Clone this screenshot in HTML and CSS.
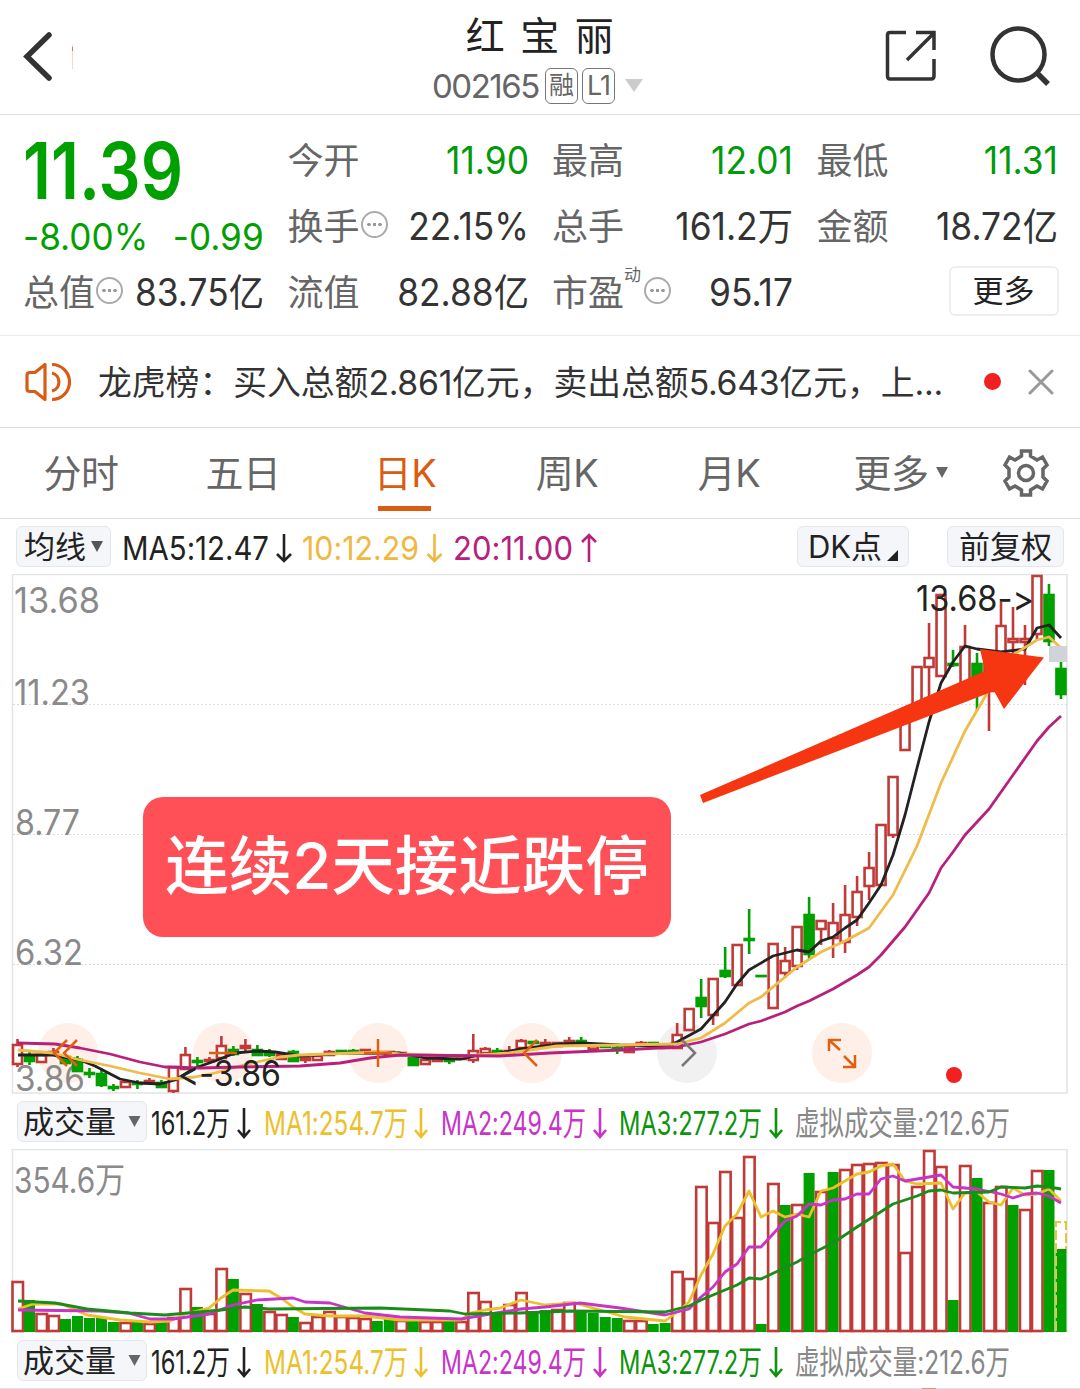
FILE: index.html
```html
<!DOCTYPE html>
<html lang="zh-CN">
<head>
  <meta charset="UTF-8">
  <meta name="viewport" content="width=device-width, initial-scale=1">
  <title>红宝丽 002165</title>
  <link rel="stylesheet" href="styles.css">
</head>
<body>
  <header class="header">
    <svg class="back" width="60" height="60" viewBox="0 0 60 60">
      <path d="M34 8L12 29.500L34 51" fill="none" stroke="#333" stroke-width="5.500" stroke-linecap="round"/>
      <path d="M57.500 18v24" stroke="#f7d9c4" stroke-width="1"/>
      <path d="M57.500 20v4" stroke="#e0794a" stroke-width="1"/>
    </svg>
    <div class="stock">
      <h1>红宝丽</h1>
      <div class="code">
        <span class="code-num">002165</span>
        <span class="tag">融</span>
        <span class="tag tag-l1">L1</span>
        <svg width="18" height="14" viewBox="0 0 18 14"><path d="M0 0h18l-9 13z" fill="#ccc"/></svg>
      </div>
    </div>
    <div class="actions">
      <svg width="52" height="52" viewBox="0 0 52 52" fill="none" stroke="#333" stroke-width="3.500">
        <path d="M21 2.500H5Q2.500 2.500 2.500 5V46Q2.500 49 5 49H46Q49 49 49 46V29"/>
        <path d="M31 2.500H49V20M49 3L22 30"/>
      </svg>
      <svg width="62" height="62" viewBox="0 0 62 62" fill="none" stroke="#333" stroke-width="4.500">
        <circle cx="28.500" cy="28.500" r="26"/>
        <path d="M46 46L58 58" stroke-width="5.500"/>
      </svg>
    </div>
  </header>

  <section class="quote">
    <div class="price-box">
      <div class="price"><span>11.39</span></div>
      <div class="change"><span>-8.00%</span><span>-0.99</span></div>
    </div>
    <div class="cell"><label>今开</label><b class="down">11.90</b></div>
    <div class="cell"><label>最高</label><b class="down">12.01</b></div>
    <div class="cell"><label>最低</label><b class="down">11.31</b></div>
    <div class="cell"><label>换手</label><i class="dots"></i><b>22.15%</b></div>
    <div class="cell"><label>总手</label><b>161.2万</b></div>
    <div class="cell"><label>金额</label><b>18.72亿</b></div>
    <div class="cell"><label>总值</label><i class="dots"></i><b>83.75亿</b></div>
    <div class="cell"><label>流值</label><b>82.88亿</b></div>
    <div class="cell"><label>市盈</label><sup>动</sup><i class="dots"></i><b>95.17</b></div>
    <div class="cell cell-more"><button class="more">更多</button></div>
  </section>

  <section class="notice">
    <svg width="46" height="40" viewBox="0 0 46 40" fill="none" stroke="#d95c13" stroke-width="3.200">
      <path d="M20 2.500V37.500L10 29.500H5Q2 29.500 2 27V13Q2 10.500 5 10.500H10Z" stroke-linejoin="round"/>
      <path d="M27 2.500A17.500 17.500 0 0 1 27 37.500"/>
      <path d="M27 11A9.300 9.300 0 0 1 27 29"/>
    </svg>
    <p>龙虎榜：买入总额<span>2.861</span>亿元，卖出总额<span>5.643</span>亿元，上<span>...</span></p>
    <i class="dot"></i>
    <svg width="26" height="26" viewBox="0 0 26 26"><path d="M2 2L24 24M24 2L2 24" stroke="#999" stroke-width="3" stroke-linecap="round"/></svg>
  </section>

  <nav class="tabs">
    <a>分时</a>
    <a>五日</a>
    <a class="active">日K</a>
    <a>周K</a>
    <a>月K</a>
    <a class="tab-more">更多<svg width="12" height="12" viewBox="0 0 12 12"><path d="M0 0h12l-6 11z" fill="#666"/></svg></a>
    <svg class="gear" width="46" height="48" viewBox="0 0 46 48" fill="none" stroke="#666" stroke-width="3.500">
      <path d="M18.500 2H27.500V7L34 11L39.500 8L44 16L40 20V28L44 32L39.500 40L34 37L27.500 41V46H18.500V41L12 37L6.500 40L2 32L6 28V20L2 16L6.500 8L12 11L18.500 7Z"/>
      <circle cx="23" cy="24" r="7.500"/>
    </svg>
  </nav>

  <div class="legend legend-main">
    <button class="chip">均线<svg width="12" height="12" viewBox="0 0 12 12"><path d="M0 0h12l-6 11z" fill="#555"/></svg></button>
    <svg class="legend-text" width="484" height="54" viewBox="116 520 484 54">
      <g fill="#222"><text x="122" y="560" textLength="147" lengthAdjust="spacingAndGlyphs">MA5:12.47</text><path class="arrow" stroke="#222" d="M284 534V561M277 554L284 561L291 554"/></g>
      <g fill="#f0b840"><text x="302" y="560" textLength="117" lengthAdjust="spacingAndGlyphs">10:12.29</text><path class="arrow" stroke="#f0b840" d="M434.500 534V561M427.500 554L434.500 561L441.500 554"/></g>
      <g fill="#b8207c"><text x="453" y="560" textLength="120" lengthAdjust="spacingAndGlyphs">20:11.00</text><path class="arrow" stroke="#b8207c" d="M589 562V535M582 542L589 535L596 542"/></g>
    </svg>
    <button class="chip chip-dk">DK点<svg width="11" height="11" viewBox="0 0 11 11"><path d="M11 0V11H0z" fill="#222"/></svg></button>
    <button class="chip chip-fq">前复权</button>
  </div>

  <div class="chart">
    <svg id="kline" width="1080" height="520" viewBox="0 574 1080 520"></svg>
    <div class="callout">连续2天接近跌停</div>
  </div>

  <div class="legend legend-vol">
    <button class="chip chip-vol">成交量<svg width="13" height="12" viewBox="0 0 12 12"><path d="M0 0h12l-6 11z" fill="#666"/></svg></button>
    <svg class="legend-text vol-text" width="866" height="54" viewBox="150 0 866 54"></svg>
  </div>

  <svg id="volume" width="1080" height="184" viewBox="0 1149 1080 184"></svg>

  <div class="legend legend-vol">
    <button class="chip chip-vol">成交量<svg width="13" height="12" viewBox="0 0 12 12"><path d="M0 0h12l-6 11z" fill="#666"/></svg></button>
    <svg class="legend-text vol-text" width="866" height="54" viewBox="150 0 866 54"></svg>
  </div>
  <div class="next-chart"><i></i></div>

  <script src="chart.js"></script>
</body>
</html>
```

FILE: styles.css
```css
* {
  box-sizing: border-box;
}

body {
  margin: 0;
  width: 1080px;
  height: 1389px;
  overflow: hidden;
  background: #fff;
  color: #333;
  font-family: Inter, "Noto Sans CJK SC", sans-serif;
  font-feature-settings: "calt" 0;
}

svg {
  display: block;
  flex: none;
}

button {
  font-family: inherit;
  color: #222;
  padding: 0;
}

/* header */
.header {
  display: grid;
  grid-template-columns: 200px 1fr 200px;
  height: 115px;
  border-bottom: 1px solid #dcdfe0;
}

.back {
  margin: 27px 0 0 15px;
}

.stock {
  padding-top: 10px;
}

h1 {
  margin: 0;
  font-size: 39px;
  line-height: 52px;
  font-weight: 400;
  letter-spacing: 15.5px;
  text-align: center;
  text-indent: 15px;
  color: #222;
}

.code {
  display: flex;
  align-items: center;
  height: 48px;
  margin-left: 232px;
  color: #666;
}

.code-num {
  width: 113px;
  font-size: 33px;
  letter-spacing: -1.5px;
}

.tag {
  width: 33px;
  height: 36px;
  margin-right: 4px;
  border: 1.5px solid #777;
  border-radius: 6px;
  font-size: 25px;
  line-height: 33px;
  text-align: center;
}

.tag-l1 {
  font-size: 27px;
  letter-spacing: -1px;
  margin-right: 10px;
}

.actions {
  display: flex;
  gap: 53px;
  padding: 26px 0 0 5px;
}

.actions svg:first-child {
  margin-top: 4px;
}

/* quote */
.quote {
  display: grid;
  grid-template-columns: repeat(4, 241px);
  grid-template-rows: repeat(3, 66px);
  column-gap: 23.5px;
  height: 221px;
  padding: 12px 23px 0;
  border-bottom: 1px solid #eceeee;
}

.price-box {
  grid-row: span 2;
  color: #00a000;
}

.price {
  height: 96px;
  font-size: 78px;
  line-height: 88px;
  font-weight: 600;
}

.price span {
  display: inline-block;
  transform: scaleX(.85);
  transform-origin: left;
}

.change {
  display: flex;
  justify-content: space-between;
  font-size: 37px;
  line-height: 28px;
}

.change span {
  transform: scaleX(.95);
  transform-origin: left;
}

.change span:last-child {
  transform-origin: right;
}

.cell {
  display: flex;
  align-items: center;
  min-width: 0;
  white-space: nowrap;
}

.cell label {
  width: 72px;
  flex: none;
  margin-top: -4px;
  font-size: 36px;
  color: #666;
}

.cell b {
  flex: 1;
  width: 0;
  display: flex;
  justify-content: flex-end;
  font-size: 38px;
  line-height: 60px;
  font-weight: 400;
  transform: scaleX(.93);
  transform-origin: right;
}

.cell b.down {
  color: #009a0a;
}

.cell sup {
  width: 19px;
  align-self: flex-start;
  margin-top: 2px;
  font-size: 17px;
  color: #666;
}

.dots {
  flex: none;
  width: 27px;
  height: 27px;
  margin: -3px 0 0 1px;
  border: 2px solid #aaa;
  border-radius: 50%;
  background:
    radial-gradient(circle at 6px 11.5px, #999 1.5px, transparent 2px),
    radial-gradient(circle at 11.5px 11.5px, #999 1.5px, transparent 2px),
    radial-gradient(circle at 17px 11.5px, #999 1.5px, transparent 2px);
}

.cell-more {
  justify-content: flex-end;
}

.more {
  width: 110px;
  height: 50px;
  margin: -2px -1px 0 0;
  border: 2px solid #eceef0;
  border-radius: 6px;
  background: #fff;
  font-size: 31px;
  line-height: 44px;
}

/* notice */
.notice {
  display: flex;
  align-items: center;
  height: 92px;
  padding-left: 25px;
  border-bottom: 1px solid #dcdfe0;
}

.notice p {
  width: 860px;
  margin: -3px 0 0 27px;
  font-size: 33.8px;
  white-space: nowrap;
}

.notice p span {
  letter-spacing: -.3px;
}

.dot {
  width: 17px;
  height: 17px;
  margin: 0 27px 0 26px;
  border-radius: 50%;
  background: #f22020;
}

/* tabs */
.tabs {
  display: flex;
  height: 91px;
  border-bottom: 1px solid #dcdfe0;
}

.tabs a {
  width: 162px;
  font-size: 38px;
  line-height: 90px;
  text-align: center;
  letter-spacing: -.5px;
  color: #666;
}

.tabs .active {
  color: #d95c13;
  background: linear-gradient(#d95c13, #d95c13) 54px 78px / 53px 5px no-repeat;
}

.tabs .tab-more {
  display: flex;
  align-items: center;
  justify-content: center;
  gap: 7px;
  width: 181px;
}

.gear {
  margin: 21px 0 0 12px;
}

/* legends */
.legend {
  display: flex;
  align-items: center;
  height: 55px;
}

.chip {
  display: flex;
  flex: none;
  align-items: center;
  justify-content: center;
  gap: 5px;
  width: 95px;
  height: 41px;
  border: 1.5px solid #e3e6ea;
  border-radius: 6px;
  background: #f5f6fa;
  font-size: 31px;
  line-height: 36px;
}

.legend-main .chip:first-child {
  margin: 0 5px 0 16px;
}

.chip-dk {
  width: 112px;
  margin-left: 197px;
}

.chip-dk svg {
  align-self: flex-end;
  margin-bottom: 5px;
}

.chip-fq {
  width: 117px;
  margin-left: 38px;
}

.chip-vol {
  width: 130px;
  margin: 0 3px 0 17px;
  gap: 12px;
}

.legend-text {
  font-size: 33px;
}

.arrow {
  fill: none;
  stroke-width: 2.6;
}

/* charts */
.chart {
  position: relative;
  height: 520px;
}

.callout {
  position: absolute;
  left: 143px;
  top: 223px;
  width: 528px;
  height: 140px;
  border-radius: 20px;
  background: #ff4f57;
  color: #fff;
  font-size: 63.5px;
  font-weight: 500;
  line-height: 138px;
  text-align: center;
  white-space: nowrap;
}

.frame {
  fill: none;
  stroke: #e2e4e5;
  stroke-width: 1.5;
}

.grid {
  stroke: #ddd;
  stroke-dasharray: 2 2;
}

.axis {
  fill: #8a8a8a;
  font-size: 35px;
}

.mark {
  fill: #222;
  font-size: 35px;
}

.line {
  fill: none;
  stroke-width: 2.8;
  stroke-linejoin: round;
}

.up {
  fill: #fff;
  stroke: #c03a38;
  stroke-width: 2.6;
}

.dn {
  fill: #00a000;
  stroke: #00a000;
  stroke-width: 2.6;
}

.vdn {
  fill: #00a000;
}

.next-chart {
  height: 2px;
  background: #e2e4e5;
}

.next-chart i {
  display: block;
  width: 14px;
  height: 2px;
  margin-left: 922px;
  background: #d89090;
}
```

FILE: chart.js
```js
const STEP = 11.994;
const X0 = 17.5;
const cx = i => X0 + i * STEP;

// direction, high, body top, body bottom, low (y values)
const candles = [
  ['r',1039,1045,1064,1067],['g',1052,1056,1061,1065],['r',1051,1055,1062,1062],['r',1048,1052,1053,1054],
  ['g',1055,1057,1063,1063],['g',1056,1060,1071,1072],['g',1068,1073,1074,1078],['g',1068,1074,1085,1087],
  ['g',1084,1087,1088,1091],['r',1081,1082,1087,1087],['g',1080,1083,1084,1089],['r',1078,1081,1083,1084],
  ['g',1080,1083,1087,1088],['r',1067,1067,1091,1093],['r',1047,1055,1069,1070],['g',1057,1061,1062,1066],
  ['r',1057,1060,1061,1064],['r',1036,1046,1058,1058],['g',1046,1050,1054,1056],['r',1039,1046,1048,1053],
  ['g',1045,1050,1055,1056],['g',1049,1053,1055,1057],['r',1054,1055,1059,1060],['g',1050,1052,1061,1062],
  ['r',1057,1058,1060,1063],['r',1053,1056,1060,1061],['r',1050,1052,1055,1056],['g',1051,1051,1052,1052],
  ['g',1049,1051,1053,1053],['r',1049,1050,1053,1053],['r',1051,1052,1053,1054],['r',1051,1052,1054,1054],
  ['r',1052,1053,1055,1055],['g',1057,1058,1065,1065],['r',1059,1060,1064,1064],['r',1057,1058,1061,1061],
  ['g',1058,1060,1061,1064],['r',1056,1057,1059,1060],['r',1034,1051,1060,1063],['r',1047,1049,1053,1053],
  ['g',1048,1051,1053,1054],['r',1046,1051,1053,1054],['r',1039,1041,1048,1048],['g',1041,1042,1043,1044],
  ['r',1039,1043,1044,1048],['r',1042,1043,1046,1046],['r',1037,1041,1044,1044],['g',1037,1041,1043,1044],
  ['r',1045,1046,1049,1050],['g',1045,1046,1047,1047],['g',1046,1048,1050,1054],['r',1046,1047,1052,1053],
  ['r',1041,1043,1044,1045],['g',1043,1043,1044,1045],['r',1046,1046,1048,1048],['r',1023,1035,1048,1048],
  ['r',1008,1009,1030,1030],['g',979,998,1006,1018],['r',978,979,1015,1025],['g',947,971,976,978],
  ['r',944,945,985,986],['g',909,939,940,954],['g',976,976,976,976],['r',943,944,1008,1009],
  ['r',947,961,973,978],['r',926,927,966,970],['g',897,915,954,960],['r',920,921,929,945],
  ['r',903,923,938,958],['r',885,915,942,953],['r',876,892,917,926],['r',852,868,886,900],
  ['r',824,825,885,886],['r',776,777,835,838],['r',717,718,750,751],['r',666,667,712,712],
  ['r',623,658,667,705],['r',594,595,676,677],['g',650,664,665,667],['r',625,647,690,690],
  ['g',653,664,690,711],['r',660,661,691,731],['r',602,626,660,660],['r',607,639,642,670],
  ['r',625,639,642,685],['r',575,576,634,640],['g',584,595,641,646],['g',662,669,694,699]
];

const volumes = ('r1281 g1300 r1313 r1315 g1319 g1316 g1318 g1318 g1322 r1322 g1322 r1323 g1322 r1317 r1288 g1307 ' +
  'r1313 r1268 g1279 r1293 g1304 r1311 r1314 g1317 r1322 r1316 r1311 r1316 r1317 r1318 g1321 g1319 r1320 g1320 ' +
  'r1321 r1321 g1320 r1321 r1292 r1301 g1313 r1304 r1292 g1311 g1310 r1309 r1302 g1311 g1313 g1317 g1318 r1320 ' +
  'r1320 g1324 g1323 r1271 r1278 r1186 r1222 r1171 r1217 r1156 g1324 r1183 g1205 r1204 g1173 r1191 g1172 r1169 ' +
  'r1164 r1163 r1162 r1164 r1252 r1186 r1150 r1166 g1300 r1165 g1178 r1202 r1186 g1205 r1209 r1170 g1170 g1249').split(' ');

const ma5 = '18,1055 53,1055 80,1060 95,1066 120,1079 140,1083 160,1084 175,1080 195,1068 215,1061 235,1053 257,1051 275,1052 300,1056 345,1053 400,1053 425,1058 461,1059 480,1055 500,1053 521,1049 560,1044 581,1043 620,1045 665,1046 677,1042 701,1029 725,1002 737,984 749,970 773,956 797,950 809,952 821,941 833,937 845,928 857,920 869,903 881,885 893,855 905,815 917,768 929,722 941,683 953,662 965,646 977,649 1001,652 1025,649 1037,628 1049,625 1061,638';
const ma10 = '18,1050 53,1053 80,1060 110,1066 140,1073 170,1079 195,1077 215,1073 240,1066 257,1062 280,1057 300,1055 380,1052 400,1054 461,1056 509,1053 557,1046 620,1045 677,1044 701,1038 725,1023 749,1003 761,997 797,967 821,952 845,941 869,928 893,895 917,846 941,783 965,731 989,690 1013,655 1037,640 1049,637 1061,648';
const ma20 = '18,1043 55,1044 80,1048 110,1054 140,1062 165,1067 200,1068 240,1067 300,1066 340,1063 370,1058 400,1055 500,1056 550,1053 620,1050 677,1047 701,1042 725,1034 749,1024 761,1021 785,1012 797,1006 809,1001 833,989 857,975 869,967 881,955 893,941 905,927 917,910 929,893 941,868 953,852 965,835 989,809 1013,775 1037,741 1049,727 1061,716';

const vma1 = '18,1309 33,1304 62,1304 87,1315 120,1320 150,1322 170,1321 185,1314 209,1308 221,1298 233,1290 269,1291 281,1298 293,1307 305,1314 330,1316 365,1316 400,1320 461,1320 470,1313 485,1310 500,1308 521,1300 545,1305 575,1303 600,1310 625,1317 665,1321 677,1312 689,1302 701,1275 713,1254 725,1226 737,1214 749,1191 761,1217 773,1211 785,1217 797,1214 809,1217 821,1191 833,1188 857,1174 869,1172 881,1166 893,1164 905,1181 917,1184 941,1183 953,1209 965,1193 977,1192 989,1202 1001,1205 1013,1188 1025,1195 1037,1194 1049,1189 1061,1201';
const vma2 = '18,1310 100,1311 128,1313 150,1319 173,1319 209,1314 233,1305 257,1300 293,1298 305,1302 330,1303 365,1313 400,1317 461,1319 490,1314 521,1309 545,1307 580,1303 620,1308 665,1315 689,1309 701,1297 713,1287 725,1272 737,1264 749,1247 761,1247 785,1221 797,1216 809,1204 821,1205 833,1200 845,1199 857,1194 869,1194 881,1179 893,1176 905,1181 941,1175 953,1187 977,1189 1001,1194 1013,1198 1025,1194 1037,1193 1049,1196 1061,1203';
const vma3 = '18,1301 55,1303 87,1309 130,1313 165,1315 221,1310 245,1307 269,1309 380,1308 450,1311 465,1314 520,1313 570,1311 665,1312 689,1306 701,1300 725,1290 737,1285 749,1278 761,1279 797,1262 809,1255 833,1243 857,1227 893,1204 917,1196 929,1191 941,1190 953,1193 989,1192 1001,1187 1025,1188 1037,1186 1049,1187 1061,1189';

const line = (pts, color) => `<polyline class="line" stroke="${color}" points="${pts}"/>`;
const label = (cls, x, y, w, t) =>
  `<text class="${cls}" x="${x}" y="${y}" textLength="${w}" lengthAdjust="spacingAndGlyphs">${t}</text>`;

function drawKline() {
  let s = '<rect class="frame" x="12.500" y="574.500" width="1054.500" height="518.500"/>';
  [704, 834, 964].forEach(y => s += `<path class="grid" d="M13 ${y}.500H1067"/>`);

  // round control buttons
  [68, 223, 378, 532, 842].forEach(x => s += `<circle cx="${x}" cy="1053" r="30" fill="#fef0e8"/>`);
  s += '<circle cx="687" cy="1053" r="30" fill="#f1f1f1"/>';

  s += label('axis', 14, 613, 86, '13.68') + label('axis', 14, 705, 76, '11.23');
  s += label('axis', 15, 835, 65, '8.77') + label('axis', 15, 965, 68, '6.32') + label('axis', 15, 1091, 70, '3.86');

  candles.forEach(([dir, hi, top, bot, lo], i) => {
    const x = cx(i);
    const cls = dir === 'r' ? 'up' : 'dn';
    s += `<path class="${cls}" d="M${x} ${hi}V${top}M${x} ${bot}V${lo}"/>`;
    s += `<rect class="${cls}" x="${x - 4.5}" y="${top}" width="9" height="${Math.max(bot - top, 0.1)}"/>`;
  });

  s += line(ma5, '#222') + line(ma10, '#efbb4a') + line(ma20, '#b8207c');
  s += '<rect x="1049" y="646" width="18" height="16" fill="#d0d4d8"/>';
  s += label('mark', 916, 611, 118, '13.68-&gt;');
  s += label('mark', 178, 1086, 103, '&lt;-3.86');

  s += '<g fill="none" stroke="#e06010" stroke-width="2.500">' +
    '<path d="M67 1040L54 1053L67 1066M77 1040L64 1053L77 1066"/>' +
    '<path d="M209 1053H237M364 1053H392M378 1039V1067"/>' +
    '<path d="M537 1040L524 1053L537 1066"/>' +
    '<path d="M829 1051V1040H841M829 1040L840 1050M844 1056L855 1067M843 1067H855V1055"/></g>' +
    '<path d="M682 1040L695 1053L682 1066" fill="none" stroke="#777" stroke-width="2.500"/>' +
    '<circle cx="954" cy="1075" r="8" fill="#f22020"/>' +
    '<path d="M700 795L985 671L980 649L1044 657.500L1004 709L994 691L703 803Z" fill="#f63511"/>';
  document.getElementById('kline').innerHTML = s;
}

function drawVolume() {
  let s = '<rect class="frame" x="12.500" y="1149.500" width="1054.500" height="182"/>';
  s += label('axis', 14, 1193, 111, '354.6万');
  volumes.forEach((v, i) => {
    const y = +v.slice(1);
    const x = cx(i);
    s += v[0] === 'r'
      ? `<rect class="up" x="${x - 5}" y="${y + 1}" width="10.500" height="${1330 - y}"/>`
      : `<rect class="vdn" x="${x - 5.5}" y="${y}" width="11" height="${1332 - y}"/>`;
  });
  s += '<path d="M1056 1331V1222H1066V1249" fill="none" stroke="#ecc33a" stroke-width="2" stroke-dasharray="10 3"/>';
  s += line(vma1, '#ecc02c') + line(vma2, '#c834c8') + line(vma3, '#1a8c1a');
  document.getElementById('volume').innerHTML = s;
}

function drawVolumeLegend(el) {
  const items = [
    ['161.2万', 151, 79, '#222', 244],
    ['MA1:254.7万', 264, 144, '#ecc02c', 421],
    ['MA2:249.4万', 441, 145, '#c834c8', 600],
    ['MA3:277.2万', 619, 143, '#0d930d', 776],
    ['虚拟成交量:212.6万', 795, 215, '#888', 0]
  ];
  el.innerHTML = items.map(([t, x, w, color, ax]) => {
    const arrow = ax ? `<path class="arrow" stroke="${color}" d="M${ax} 13V42M${ax - 6} 35L${ax} 42L${ax + 6} 35"/>` : '';
    return `<g fill="${color}">${label('', x, 40, w, t)}${arrow}</g>`;
  }).join('');
}

drawKline();
drawVolume();
document.querySelectorAll('.vol-text').forEach(drawVolumeLegend);
```
